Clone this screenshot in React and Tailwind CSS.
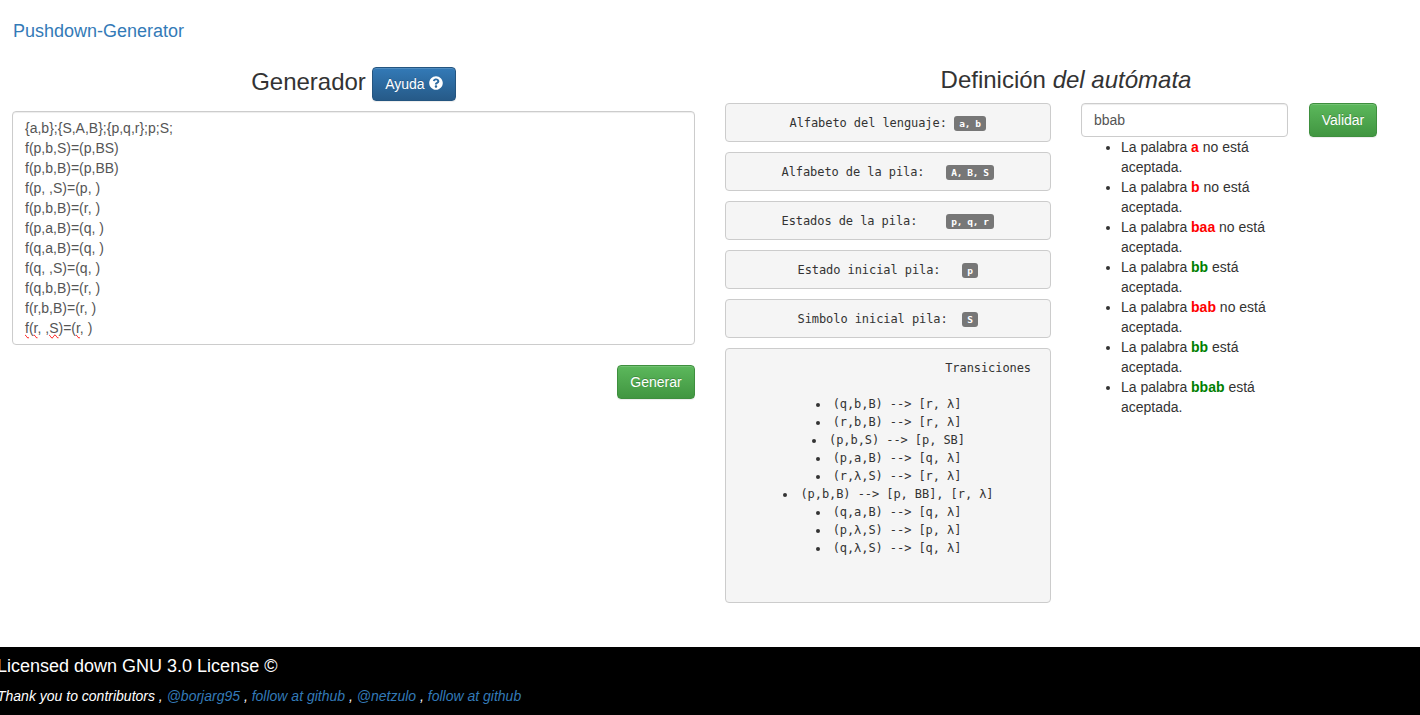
import { FaQuestionCircle } from "react-icons/fa";

const definitions = [
  { label: "Alfabeto del lenguaje:", value: "a, b", indent: "pl-[63.5px]", badge: "w-8" },
  { label: "Alfabeto de la pila:", value: "A, B, S", indent: "pl-[55.5px]", badge: "w-12" },
  { label: "Estados de la pila:", value: "p, q, r", indent: "pl-[55.5px]", badge: "w-12" },
  { label: "Estado inicial pila:", value: "p", indent: "pl-[71.5px]", badge: "w-4" },
  { label: "Simbolo inicial pila:", value: "S", indent: "pl-[71.5px]", badge: "w-4" },
];

const rules = [
  "{a,b};{S,A,B};{p,q,r};p;S;",
  "f(p,b,S)=(p,BS)",
  "f(p,b,B)=(p,BB)",
  "f(p, ,S)=(p, )",
  "f(p,b,B)=(r, )",
  "f(p,a,B)=(q, )",
  "f(q,a,B)=(q, )",
  "f(q, ,S)=(q, )",
  "f(q,b,B)=(r, )",
  "f(r,b,B)=(r, )",
];

const transitions = [
  "(q,b,B) --> [r, λ]",
  "(r,b,B) --> [r, λ]",
  "(p,b,S) --> [p, SB]",
  "(p,a,B) --> [q, λ]",
  "(r,λ,S) --> [r, λ]",
  "(p,b,B) --> [p, BB], [r, λ]",
  "(q,a,B) --> [q, λ]",
  "(p,λ,S) --> [p, λ]",
  "(q,λ,S) --> [q, λ]",
];

const results = [
  { word: "a", ok: false },
  { word: "b", ok: false },
  { word: "baa", ok: false },
  { word: "bb", ok: true },
  { word: "bab", ok: false },
  { word: "bb", ok: true },
  { word: "bbab", ok: true },
];

const tones = {
  blue: "border-[#245580] from-[#337ab7] to-[#265a88]",
  green: "border-[#3e8f3e] from-[#5cb85c] to-[#419641]",
};

function Button({ tone, width, children }) {
  return (
    <button
      className={`flex h-[34px] shrink-0 items-center justify-center rounded border bg-linear-to-b text-sm leading-5 text-white shadow-[inset_0_1px_0_rgba(255,255,255,0.15),0_1px_1px_rgba(0,0,0,0.075)] [text-shadow:0_-1px_0_rgba(0,0,0,0.2)] ${width} ${tones[tone]}`}
    >
      {children}
    </button>
  );
}

function Misspelt({ children }) {
  return <span className="[text-decoration-line:spelling-error]">{children}</span>;
}

function Definition({ item }) {
  return (
    <div className={`flex h-[39px] items-center rounded border border-[#ccc] bg-[#f5f5f5] ${item.indent}`}>
      <span className="w-[164.5px]">{item.label}</span>
      <span
        className={`mt-0.5 flex h-[15px] items-center justify-center rounded-[3px] bg-[#777] text-[9.5px] leading-none font-bold tracking-[-0.38px] text-white ${item.badge}`}
      >
        {item.value}
      </span>
    </div>
  );
}

export default function App() {
  return (
    <div className="flex h-[715px] w-[1420px] flex-col overflow-hidden bg-white font-['Liberation_Sans',Arial,sans-serif] text-sm leading-5 text-[#333]">
      <header className="h-[67px] shrink-0 pt-[21px] pl-[13px]">
        <a className="text-lg leading-5 text-[#337ab7]">Pushdown-Generator</a>
      </header>

      <main className="flex h-[580px] shrink-0 gap-[30px] pl-3">
        <section className="flex w-[683px] flex-col">
          <h3 className="flex h-[44px] justify-center gap-1.5 text-2xl leading-[30px]">
            Generador
            <Button tone="blue" width="w-[84px]">
              Ayuda
              <FaQuestionCircle className="mb-0.5 ml-1 size-[14px]" />
            </Button>
          </h3>
          <div className="h-[234px] rounded border border-[#ccc] bg-white px-3 py-1.5 whitespace-pre text-[#555] shadow-[inset_0_1px_1px_rgba(0,0,0,0.075)]">
            {rules.map((r, i) => (
              <div key={i}>{r}</div>
            ))}
            <div>
              <Misspelt>f</Misspelt>(<Misspelt>r</Misspelt>, ,<Misspelt>S</Misspelt>)=(<Misspelt>r</Misspelt>, )
            </div>
          </div>
          <div className="mt-5 flex justify-end">
            <Button tone="green" width="w-[78px]">Generar</Button>
          </div>
        </section>

        <section className="w-[683px]">
          <h3 className="h-9 pr-px text-center text-2xl leading-[26px]">
            Definición <em>del autómata</em>
          </h3>
          <div className="flex">
            <div className="flex w-[326px] flex-col gap-2.5 font-['DejaVu_Sans_Mono',monospace] text-[12px] leading-[18px] tracking-[-0.074px]">
              {definitions.map((d) => (
                <Definition key={d.label} item={d} />
              ))}
              <div className="h-[255px] rounded border border-[#ccc] bg-[#f5f5f5] pt-[10px]">
                <div className="pr-[19px] text-right">Transiciones</div>
                <ul className="mt-[18px] list-inside list-disc pl-px text-center">
                  {transitions.map((t) => (
                    <li key={t}>{t}</li>
                  ))}
                </ul>
              </div>
            </div>

            <div className="ml-[30px] w-[207px]">
              <input
                className="block h-[34px] w-full rounded border border-[#ccc] bg-white px-3 text-sm text-[#555] shadow-[inset_0_1px_1px_rgba(0,0,0,0.075)]"
                defaultValue="bbab"
              />
              <ul className="list-disc pl-10">
                {results.map((r, i) => (
                  <li key={i}>
                    La palabra{" "}
                    <b className={r.ok ? "text-[#008000]" : "text-[#f00]"}>{r.word}</b>
                    {r.ok ? " está" : " no está"}
                    <br />
                    aceptada.
                  </li>
                ))}
              </ul>
            </div>
            <div className="ml-[21px]">
              <Button tone="green" width="w-[68px]">Validar</Button>
            </div>
          </div>
        </section>
      </main>

      <footer className="h-[68px] shrink-0 bg-black pt-[9px] text-white">
        <div className="-ml-[3px]">
          <h4 className="text-lg leading-5">Licensed down GNU 3.0 License ©</h4>
          <p className="mt-2.5 text-sm leading-5 italic">
            Thank you to contributors , <a className="text-[#337ab7]">@borjarg95</a> ,{" "}
            <a className="text-[#337ab7]">follow at github</a> , <a className="text-[#337ab7]">@netzulo</a> ,{" "}
            <a className="text-[#337ab7]">follow at github</a>
          </p>
        </div>
      </footer>
    </div>
  );
}
